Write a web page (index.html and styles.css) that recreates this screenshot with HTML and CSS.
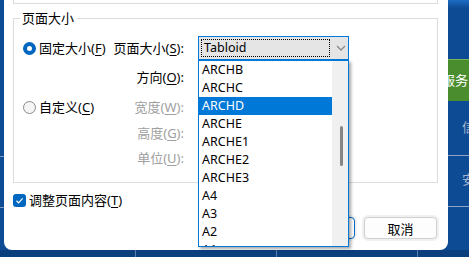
FILE: index.html
```html
<!DOCTYPE html>
<html lang="zh-CN">
<head>
    <meta charset="UTF-8">
    <meta name="viewport" content="width=device-width, initial-scale=1.0">
    <title>页面设置</title>
    <link rel="stylesheet" href="styles.css">
</head>
<body>
    <div class="screen">
        <div class="desk-left">
            <div class="desk-cell"></div>
            <div class="desk-cell short"></div>
        </div>

        <div class="dialog">
            <div class="prev-group"></div>

            <fieldset class="group">
                <legend>页面大小</legend>
                <div class="group-grid">
                    <label class="option"><span class="radio checked"></span><span>固定大小(<u>F</u>)</span></label>
                    <span class="field-label">页面大小(<u>S</u>):</span>
                    <div class="combo-wrap">
                        <div class="combo">
                            <span class="combo-value">Tabloid</span>
                            <svg class="chevron" width="10" height="6" viewBox="0 0 10 6">
                                <path d="M1 1 L5 5 L9 1" fill="none" stroke="#8a8a8a" stroke-width="1.3"/>
                            </svg>
                        </div>
                        <div class="dropdown">
                            <ul class="dropdown-items">
                                <li>ARCHB</li>
                                <li>ARCHC</li>
                                <li class="selected">ARCHD</li>
                                <li>ARCHE</li>
                                <li>ARCHE1</li>
                                <li>ARCHE2</li>
                                <li>ARCHE3</li>
                                <li>A4</li>
                                <li>A3</li>
                                <li>A2</li>
                                <li>A1</li>
                            </ul>
                            <div class="scrollbar"><div class="thumb"></div></div>
                        </div>
                    </div>

                    <span></span>
                    <span class="field-label">方向(<u>O</u>):</span>
                    <span></span>

                    <label class="option"><span class="radio"></span><span>自定义(<u>C</u>)</span></label>
                    <span class="field-label disabled">宽度(<u>W</u>):</span>
                    <span></span>

                    <span></span>
                    <span class="field-label disabled">高度(<u>G</u>):</span>
                    <span></span>

                    <span></span>
                    <span class="field-label disabled">单位(<u>U</u>):</span>
                    <span></span>
                </div>
            </fieldset>

            <label class="check-row">
                <span class="checkbox">
                    <svg width="13" height="13" viewBox="0 0 13 13">
                        <path d="M3.5 6.8 L5.6 8.8 L9.6 4.4" fill="none" stroke="#fff" stroke-width="1.2"/>
                    </svg>
                </span>
                <span>调整页面内容(<u>T</u>)</span>
            </label>

            <div class="buttons">
                <button class="btn default">确定</button>
                <button class="btn">取消</button>
            </div>
        </div>

        <div class="desk-right">
            <div class="desk-top"></div>
            <div class="tab-green">服务</div>
            <div class="side-cell">信</div>
            <div class="side-cell short">安</div>
        </div>
    </div>

    <div class="taskbar">
        <span></span>
        <span></span>
        <span></span>
        <span></span>
    </div>
</body>
</html>
```

FILE: styles.css
```css
/* Base */
body {
    margin: 0;
    width: 469px;
    height: 257px;
    overflow: hidden;
    background: #0d4b94;
    font-family: "Noto Sans", "Noto Sans CJK SC", sans-serif;
    font-size: 13px;
    line-height: 16px;
    color: #000;
}

u {
    text-underline-offset: 2px;
}

.screen {
    display: flex;
    height: 250px;
}

/* Desktop behind the dialog */
.desk-left {
    width: 4px;
    flex: none;
    padding-top: 102px;
}

.desk-cell {
    height: 54px;
    border-bottom: 1px solid #7f97bb;
}

.desk-cell.short {
    height: 50px;
}

.desk-right {
    flex: 1;
    overflow: hidden;
}

.desk-top {
    height: 8px;
    background: linear-gradient(#1d6cc4, #0d4b94);
}

.tab-green {
    margin-top: 51px;
    height: 41px;
    background: #4a8d2e;
    border-top: 1px solid #78b25a;
    color: #fff;
    font-size: 13px;
    line-height: 41px;
    white-space: nowrap;
    text-indent: -6px;
}

.side-cell {
    height: 54px;
    line-height: 52px;
    padding-left: 14px;
    border-bottom: 1px solid #8ea5c6;
    color: #a5b5cf;
    font-size: 13px;
}

.side-cell.short {
    height: 50px;
    line-height: 46px;
}

.taskbar {
    display: flex;
    height: 7px;
    background: #0b3e7d;
}

.taskbar span {
    width: 141px;
    border-left: 1px solid #5a7cab;
    box-sizing: border-box;
}

.taskbar span:first-child {
    width: 135px;
    border-left: none;
}

.taskbar span:last-child {
    flex: 1;
}

/* Dialog */
.dialog {
    width: 444px;
    flex: none;
    background: #fff;
    border-radius: 0 0 8px 8px;
    display: flex;
    flex-direction: column;
}

.prev-group {
    margin-left: 9px;
    width: 425px;
    height: 4px;
    box-sizing: border-box;
    border: 1px solid #dcdcdc;
    border-top: none;
}

.group {
    margin: 6px 0 0 9px;
    width: 425px;
    box-sizing: border-box;
    border: 1px solid #dcdcdc;
    padding: 10px 0 12px 9px;
    min-width: 0;
}

.group legend {
    padding: 0 3px 0 2px;
    margin-left: -3px;
    line-height: 16px;
}

.group-grid {
    display: grid;
    grid-template-columns: 88px 87px 151px;
    grid-template-rows: 24px 34px 26px 26px 24px;
    align-items: center;
}

.option {
    display: flex;
    align-items: center;
    gap: 3px;
    white-space: nowrap;
}

.radio {
    width: 13px;
    height: 13px;
    box-sizing: border-box;
    border-radius: 50%;
    border: 1px solid #8a8a8a;
    background: #f5f5f5;
    flex: none;
}

.radio.checked {
    border: 4px solid #0067c0;
    background: #fff;
}

.field-label {
    text-align: right;
    padding-right: 14px;
    white-space: nowrap;
}

.field-label.disabled {
    color: #a0a0a0;
}

/* Combo box with its open list */
.combo-wrap {
    position: relative;
    height: 24px;
}

.combo {
    height: 24px;
    box-sizing: border-box;
    border: 1px solid #0078d7;
    background: #e5e5e5;
    display: flex;
    align-items: center;
}

.combo-value {
    width: 129px;
    height: 18px;
    margin-left: 2px;
    box-sizing: border-box;
    border: 1px dotted #000;
    padding-left: 2px;
    line-height: 16px;
    font-size: 12.5px;
}

.chevron {
    margin-left: 6px;
}

.dropdown {
    position: absolute;
    top: 24px;
    left: 0;
    width: 151px;
    height: 187px;
    box-sizing: border-box;
    border: 1px solid #0078d7;
    background: #fff;
    display: flex;
    box-shadow: 2px 2px 3px rgba(0, 0, 0, 0.35);
    z-index: 2;
}

.dropdown-items {
    flex: 1;
    margin: 0;
    padding: 0;
    list-style: none;
    overflow: hidden;
    font-size: 12.5px;
}

.dropdown-items li {
    height: 18px;
    line-height: 18px;
    padding-left: 3px;
}

.dropdown-items li.selected {
    background: #0078d7;
    color: #fff;
}

.scrollbar {
    width: 16px;
    flex: none;
    background: #f0f0f0;
}

.thumb {
    width: 3px;
    height: 40px;
    margin: 65px 0 0 8px;
    border-radius: 2px;
    background: #858585;
}

/* Checkbox and buttons */
.check-row {
    display: flex;
    align-items: center;
    gap: 3px;
    height: 16px;
    margin: 9px 0 0 9px;
}

.checkbox {
    width: 13px;
    height: 13px;
    border-radius: 3px;
    background: #0067c0;
    display: flex;
}

.buttons {
    display: flex;
    justify-content: flex-end;
    gap: 9px;
    margin-top: 9px;
    padding-right: 11px;
}

.btn {
    width: 73px;
    height: 22px;
    box-sizing: border-box;
    border: 1px solid #d0d0d0;
    border-radius: 4px;
    background: #fdfdfd;
    font-family: inherit;
    font-size: 13px;
    padding: 0;
    box-shadow: 0 0 0 2px #f0f0f0;
}

.btn.default {
    border-color: #0067c0;
}
```
